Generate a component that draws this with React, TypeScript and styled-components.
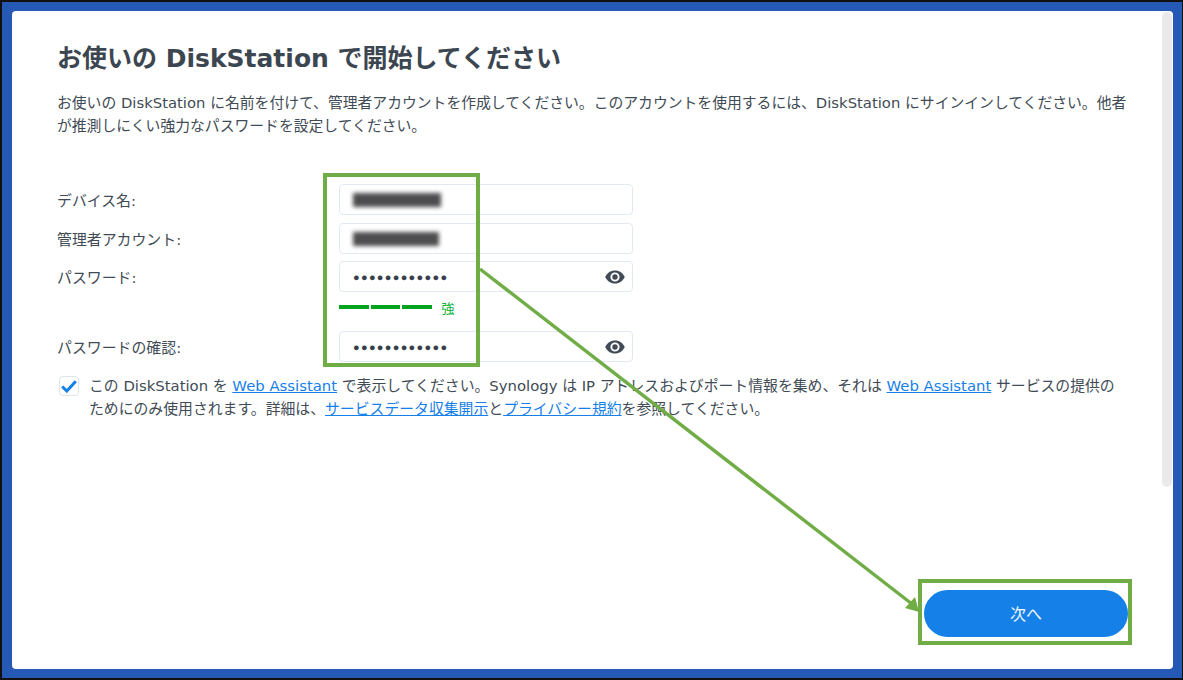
import React from "react";
import styled, { createGlobalStyle } from "styled-components";

const GlobalStyle = createGlobalStyle`
  html, body {
    margin: 0;
    padding: 0;
    background: #000;
  }
  body {
    font-family: "DejaVu Sans", "Noto Sans CJK JP", sans-serif;
    color: #414b55;
  }
`;

const Frame = styled.div`
  position: relative;
  box-sizing: border-box;
  width: 1183px;
  height: 680px;
  padding: 9px 9px 9px 10px;
  border: 2px solid #111;
  border-right-width: 1px;
  background: #2559b5;
  overflow: hidden;
`;

const Card = styled.main`
  position: relative;
  box-sizing: border-box;
  display: flex;
  flex-direction: column;
  height: 100%;
  padding: 30px 45px 32px 45px;
  background: #fff;
  border-radius: 4px;
`;

const Scrollbar = styled.div`
  position: absolute;
  top: 1px;
  right: 1px;
  width: 10px;
  height: 475px;
  background: #eaeaea;
  border-radius: 5px;
`;

const Title = styled.h1`
  margin: 0 0 14px;
  font-size: 25px;
  line-height: 36px;
  font-weight: 700;
  color: #3c4650;
`;

const Intro = styled.p`
  margin: 0 0 47px;
  font-size: 14.82px;
  line-height: 23px;
  white-space: nowrap;
`;

const Form = styled.div`
  display: flex;
  flex-direction: column;
`;

const Row = styled.div<{ $after?: number }>`
  display: flex;
  align-items: center;
  margin-bottom: ${(p) => p.$after ?? 8}px;
`;

const Label = styled.label`
  width: 282px;
  font-size: 14.9px;
`;

const Field = styled.div`
  box-sizing: border-box;
  display: flex;
  align-items: center;
  justify-content: space-between;
  width: 294px;
  height: 31px;
  padding: 0 7px 0 13px;
  border: 1px solid #e3e9f0;
  border-radius: 4px;
`;

const Blurred = styled.span<{ $w: number }>`
  display: block;
  width: ${(p) => p.$w}px;
  height: 14px;
  background: #4d4d4f;
  filter: blur(2px);
`;

const Dots = styled.span`
  font-size: 11px;
  letter-spacing: 1.3px;
  color: #36404c;
  font-family: "Liberation Sans", sans-serif;
`;

const Strength = styled.div`
  display: flex;
  align-items: center;
  gap: 2px;
  height: 30px;
  margin: 0 0 9px 282px;
`;

const StrengthBar = styled.span`
  width: 29.5px;
  height: 4px;
  background: #02a41f;
`;

const StrengthText = styled.span`
  margin-left: 8px;
  font-size: 13px;
  color: #0cb03a;
`;

const Consent = styled.div`
  display: flex;
  align-items: flex-start;
  gap: 10px;
  margin: 2px 0 0 2px;
`;

const CheckBox = styled.span`
  box-sizing: border-box;
  display: flex;
  align-items: center;
  justify-content: center;
  flex: none;
  width: 20px;
  height: 20px;
  margin-top: 1px;
  border: 1px solid #dde4ec;
  border-radius: 4px;
`;

const ConsentText = styled.p`
  margin: 0;
  font-size: 14.85px;
  line-height: 23px;
  white-space: nowrap;
`;

const TextLink = styled.a`
  color: #1580e8;
  text-decoration: underline;
`;

const Footer = styled.div`
  display: flex;
  justify-content: flex-end;
  margin-top: auto;
`;

const NextButton = styled.button`
  width: 204px;
  height: 47px;
  padding: 0 0 2px;
  border: 0;
  border-radius: 24px;
  background: #1580e8;
  color: #f2f8ff;
  font-family: "Noto Sans CJK JP", sans-serif;
  font-size: 16px;
`;

// screenshot annotations drawn over the page
const Highlight = styled.div<{ $x: number; $y: number; $w: number; $h: number }>`
  position: absolute;
  box-sizing: border-box;
  left: ${(p) => p.$x}px;
  top: ${(p) => p.$y}px;
  width: ${(p) => p.$w}px;
  height: ${(p) => p.$h}px;
  border: 4px solid #70ad47;
`;

const ArrowLayer = styled.svg`
  position: absolute;
  left: -2px;
  top: -2px;
  width: 1183px;
  height: 680px;
  pointer-events: none;
`;

const Eye = () => (
  <svg width="20" height="14" viewBox="0 0 20 14" aria-hidden="true">
    <path
      fill="#414b55"
      fillRule="evenodd"
      d="M10 0.5C5.6 0.5 1.9 3.2 0.2 7c1.7 3.8 5.4 6.5 9.8 6.5s8.1-2.7 9.8-6.5C18.1 3.2 14.4 0.5 10 0.5zM10 11.6A4.6 4.6 0 1 1 10 2.4a4.6 4.6 0 0 1 0 9.2zM10 4.3a2.7 2.7 0 1 0 0 5.4 2.7 2.7 0 0 0 0-5.4z"
    />
  </svg>
);

const App: React.FC = () => {
  return (
    <>
      <GlobalStyle />
      <Frame>
        <Card>
          <Scrollbar />
          <Title>お使いの DiskStation で開始してください</Title>
          <Intro>
            お使いの DiskStation に名前を付けて、管理者アカウントを作成してください。このアカウントを使用するには、DiskStation にサインインしてください。他者
            <br />
            が推測しにくい強力なパスワードを設定してください。
          </Intro>
          <Form>
            <Row>
              <Label>デバイス名:</Label>
              <Field>
                <Blurred $w={88} />
              </Field>
            </Row>
            <Row $after={7}>
              <Label>管理者アカウント:</Label>
              <Field>
                <Blurred $w={86} />
              </Field>
            </Row>
            <Row $after={0}>
              <Label>パスワード:</Label>
              <Field>
                <Dots>●●●●●●●●●●●●</Dots>
                <Eye />
              </Field>
            </Row>
            <Strength>
              <StrengthBar />
              <StrengthBar />
              <StrengthBar />
              <StrengthText>強</StrengthText>
            </Strength>
            <Row $after={11}>
              <Label>パスワードの確認:</Label>
              <Field>
                <Dots>●●●●●●●●●●●●</Dots>
                <Eye />
              </Field>
            </Row>
          </Form>
          <Consent>
            <CheckBox>
              <svg width="16" height="13" viewBox="0 0 16 13" aria-hidden="true">
                <path d="M1.2 6.5L5.8 11L14.8 1.2" fill="none" stroke="#1580e8" strokeWidth="3" />
              </svg>
            </CheckBox>
            <ConsentText>
              この DiskStation を <TextLink>Web Assistant</TextLink> で表示してください。Synology は IP アドレスおよびポート情報を集め、それは <TextLink>Web Assistant</TextLink> サービスの提供の
              <br />
              ためにのみ使用されます。詳細は、<TextLink>サービスデータ収集開示</TextLink>と<TextLink>プライバシー規約</TextLink>を参照してください。
            </ConsentText>
          </Consent>
          <Footer>
            <NextButton>次へ</NextButton>
          </Footer>
        </Card>
        <Highlight $x={321} $y={171} $w={157} $h={194} />
        <Highlight $x={916} $y={577} $w={214} $h={66} />
        <ArrowLayer viewBox="0 0 1183 680">
          <line x1="480" y1="269" x2="912" y2="604" stroke="#70ad47" strokeWidth="3.4" />
          <polygon points="919,612 905,608 915,597" fill="#70ad47" />
        </ArrowLayer>
      </Frame>
    </>
  );
};

export default App;
